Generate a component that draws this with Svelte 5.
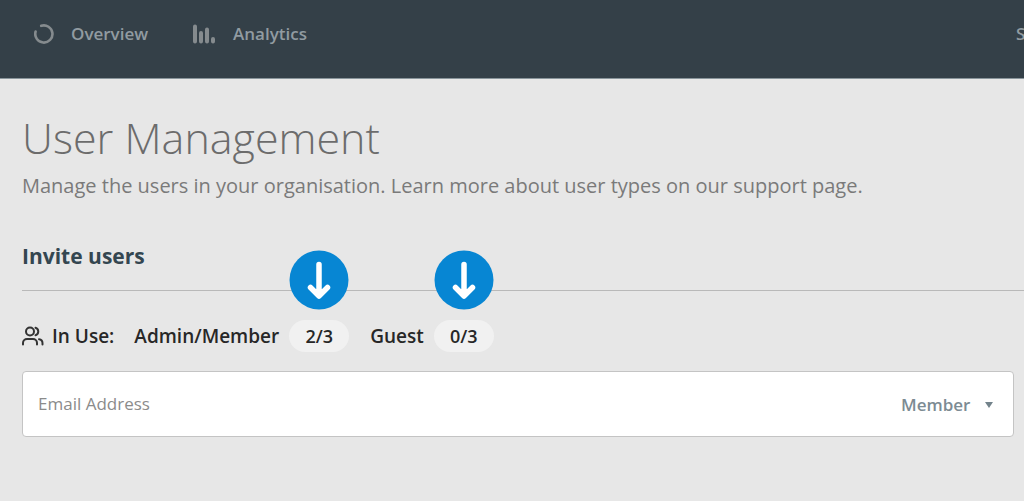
<script lang="ts">
	const roles = ['Member', 'Admin', 'Guest'];
	const seats = [
		{ name: 'Admin/Member', used: 2, total: 3 },
		{ name: 'Guest', used: 0, total: 3 }
	];

	let email = '';
	let role = 'Member';
</script>

<nav>
	<a href="#overview">
		<svg width="20" height="20" viewBox="0 0 20 20" aria-hidden="true">
			<path d="M7.2 1.8A8.6 8.6 0 1 1 1.6 7.6" />
		</svg>
		Overview
	</a>
	<a href="#analytics">
		<svg class="bars" width="24" height="20" viewBox="0 0 24 20" aria-hidden="true">
			<path d="M3 2.500v15M9 9v8.500M15 5.500v12M21 15v2.500" />
		</svg>
		Analytics
	</a>
	<a class="last" href="#s">S</a>
</nav>

<main>
	<h1>User Management</h1>
	<p>Manage the users in your organisation. Learn more about user types on our support page.</p>

	<h2>Invite users</h2>

	<div class="usage">
		<svg class="people" width="22" height="20" viewBox="0 0 22 20" aria-hidden="true">
			<circle cx="8" cy="5.500" r="4" />
			<path d="M1 18.500v-1.500a4 4 0 0 1 4-4h6a4 4 0 0 1 4 4v1.500" />
			<path d="M13.500 1.700a4 4 0 0 1 0 7.600M17 13.200a4 4 0 0 1 3.500 4v1.300" />
		</svg>
		<span class="label">In Use:</span>
		{#each seats as seat}
			<span class="name">{seat.name}</span>
			<span class="count">
				{seat.used}/{seat.total}
				<svg class="marker" viewBox="0 0 60 60" aria-hidden="true">
					<circle cx="30" cy="30" r="29.500" />
					<path d="M30 14.500v31M21.500 37.500l8.500 8.500 8.500-8.500" />
				</svg>
			</span>
		{/each}
	</div>

	<form>
		<input type="email" placeholder="Email Address" aria-label="Email Address" bind:value={email} />
		<div class="role">
			<select aria-label="Role" bind:value={role}>
				{#each roles as option}
					<option>{option}</option>
				{/each}
			</select>
			<svg width="8" height="6" viewBox="0 0 8 6" aria-hidden="true"><path d="M0 0h8L4 6z" /></svg>
		</div>
	</form>
</main>

<style>
	:global(body) {
		background: #e7e7e7;
		font-family: 'Open Sans', 'Noto Sans', sans-serif;
		overflow-x: hidden;
	}

	nav {
		display: flex;
		align-items: center;
		gap: 44px;
		height: 67px;
		padding: 0 0 11px 34px;
		border-bottom: 1px solid #89959b;
		background: #344048;
		overflow: hidden;
	}

	nav a {
		display: flex;
		align-items: center;
		gap: 17px;
		color: #919ba1;
		font-size: 17px;
		font-weight: 600;
		line-height: 24px;
		text-decoration: none;
	}

	nav a.last {
		width: 8px;
		margin-left: auto;
	}

	nav svg {
		fill: none;
		stroke: #858b8e;
		stroke-width: 2.600;
		stroke-linecap: round;
	}

	nav svg.bars {
		stroke-width: 4;
	}

	main {
		padding: 29px 0 0 22px;
	}

	h1 {
		margin: 0;
		color: #6c6c6c;
		font-size: 43px;
		font-weight: 300;
		line-height: 60px;
	}

	p {
		margin: 3px 0 0;
		color: #7a7a7a;
		font-size: 20px;
		line-height: 30px;
	}

	h2 {
		margin: 40px 0 0;
		padding-bottom: 19px;
		border-bottom: 1px solid #b9b9b9;
		color: #344650;
		font-size: 21px;
		font-weight: 700;
		line-height: 30px;
	}

	.usage {
		display: flex;
		align-items: center;
		margin-top: 29px;
		color: #272727;
		font-size: 19px;
		font-weight: 600;
		line-height: 32px;
	}

	.people {
		fill: none;
		stroke: #333;
		stroke-width: 2;
		stroke-linecap: round;
	}

	.label {
		margin: 0 20px 0 8px;
	}

	.count {
		position: relative;
		width: 60px;
		margin: 0 21px 0 10px;
		border-radius: 16px;
		background: #f1f1f1;
		font-size: 18px;
		text-align: center;
	}

	.marker {
		position: absolute;
		bottom: 42px;
		left: 0;
		width: 60px;
		height: 60px;
		fill: #0786d3;
	}

	.marker path {
		fill: none;
		stroke: #fff;
		stroke-width: 5.500;
		stroke-linecap: round;
		stroke-linejoin: round;
	}

	form {
		display: flex;
		align-items: center;
		height: 64px;
		margin: 19px 10px 0 0;
		padding: 0 20px 0 15px;
		border: 1px solid #c4c4c4;
		border-radius: 4px;
		background: #fff;
	}

	input {
		flex: 1;
		min-width: 0;
		padding: 0;
		border: 0;
		background: none;
		font: 400 17px/24px 'Open Sans', 'Noto Sans', sans-serif;
		outline: none;
	}

	input::placeholder {
		color: #8b8b8b;
		opacity: 1;
	}

	.role {
		display: flex;
		align-items: center;
		gap: 14px;
		padding-top: 2px;
	}

	select {
		padding: 0;
		border: 0;
		background: none;
		color: #7c8b93;
		font: 600 17px/24px 'Open Sans', 'Noto Sans', sans-serif;
		appearance: none;
	}

	.role svg {
		fill: #73838b;
	}
</style>
